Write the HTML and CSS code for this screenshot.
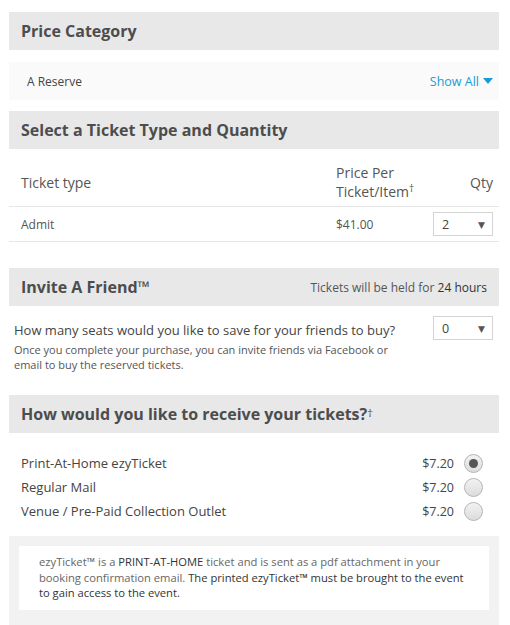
FILE: index.html
```html
<!DOCTYPE html>
<html>
<head>
<meta charset="utf-8">
<link rel="stylesheet" href="styles.css">
</head>
<body>
<div class="page">
  <section class="panel">
    <h2 class="head">Price Category</h2>
    <div class="cat-row">
      <span>A Reserve</span>
      <span class="show-all">Show All <svg class="caret" width="10" height="6" viewBox="0 0 10 6"><path d="M0 0H10L5 6Z" fill="#1a9ad6"/></svg></span>
    </div>
  </section>

  <section class="panel sec2">
    <h2 class="head">Select a Ticket Type and Quantity</h2>
    <div class="ticket-head">
      <span class="c1">Ticket type</span>
      <span class="c2">Price Per<br>Ticket/Item<sup>†</sup></span>
      <span class="c3">Qty</span>
    </div>
    <div class="ticket-row">
      <span class="c1">Admit</span>
      <span class="c2">$41.00</span>
      <span class="c3"><span class="select"><span>2</span><span class="arr">▼</span></span></span>
    </div>
  </section>

  <section class="panel sec3">
    <div class="head head-split">
      <h2 class="title">Invite A Friend™</h2>
      <span class="held">Tickets will be held for <b>24 hours</b></span>
    </div>
    <div class="invite">
      <div class="invite-text">
        <p class="q">How many seats would you like to save for your friends to buy?</p>
        <p class="desc">Once you complete your purchase, you can invite friends via Facebook or email to buy the reserved tickets.</p>
      </div>
      <span class="select"><span>0</span><span class="arr">▼</span></span>
    </div>
  </section>

  <section class="panel sec4">
    <h2 class="head">How would you like to receive your tickets?<sup>†</sup></h2>
    <ul class="delivery">
      <li><span class="name">Print-At-Home ezyTicket</span><span class="price">$7.20</span><span class="radio on"></span></li>
      <li><span class="name">Regular Mail</span><span class="price">$7.20</span><span class="radio"></span></li>
      <li><span class="name">Venue / Pre-Paid Collection Outlet</span><span class="price">$7.20</span><span class="radio"></span></li>
    </ul>
  </section>

  <section class="info-wrap">
    <div class="info">
      ezyTicket™ is a <span class="dk">PRINT-AT-HOME</span> ticket and is sent as a pdf attachment in your booking confirmation email. <span class="dk">The printed ezyTicket™ must be brought to the event to gain access to the event.</span>
    </div>
  </section>
</div>
</body>
</html>
```
FILE: styles.css
```css
* { box-sizing: border-box; }
html, body { margin: 0; padding: 0; background: #fff; }
body {
  font-family: "Open Sans", "DejaVu Sans", sans-serif;
  color: #555;
}
.page {
  width: 490px;
  margin-left: 9px;
  padding-top: 12px;
}
.panel { margin: 0; }
.head {
  margin: 0;
  height: 38px;
  background: #e8e8e8;
  padding: 0 12px;
  display: flex;
  align-items: center;
  font-size: 16px;
  font-weight: 700;
  color: #4d4d4d;
}
.head sup { font-size: 11px; font-weight: 400; position: relative; top: -2px; }
.cat-row {
  margin-top: 12px;
  height: 38px;
  background: #fafafa;
  display: flex;
  align-items: center;
  justify-content: space-between;
  padding: 0 6px 0 18px;
  font-size: 12px;
  color: #444;
}
.show-all { color: #1a9ad6; font-size: 12.5px; display: flex; align-items: center; gap: 4px; }
.caret { display: block; }
.sec2 { margin-top: 11px; }
.ticket-head, .ticket-row {
  display: flex;
  align-items: center;
  padding: 0 6px 0 12px;
  border-bottom: 1px solid #e6e6e6;
}
.ticket-head { height: 58px; font-size: 14px; color: #555; padding-top: 10px; }
.ticket-head .c2 { line-height: 19px; }
.ticket-head sup { font-size: 10px; vertical-align: 0; position: relative; top: -5px; }
.ticket-row { height: 35px; font-size: 12px; }
.c1 { flex: 1; }
.c2 { width: 97px; }
.c3 { width: 60px; display: flex; justify-content: flex-end; }
.select {
  width: 60px;
  height: 24px;
  border: 1px solid #d4d4d4;
  background: #fff;
  display: flex;
  align-items: center;
  justify-content: space-between;
  padding: 0 7px 0 8px;
  font-size: 12.5px;
  color: #444;
}
.arr { font-size: 9px; color: #555; }
.sec3 { margin-top: 26px; }
.head-split { justify-content: space-between; }
.title { margin: 0; font-size: 16px; font-weight: 700; }
.held { font-size: 12px; font-weight: 400; color: #555; }
.held b { font-weight: 400; color: #333; }
.invite {
  display: flex;
  justify-content: space-between;
  align-items: flex-start;
  padding: 10px 6px 0 5px;
}
.invite-text { width: 390px; }
.q { margin: 5px 0 0; font-size: 13px; color: #444; }
.desc { margin: 3px 0 0; font-size: 11px; line-height: 15px; color: #555; }
.sec4 { margin-top: 23px; }
.delivery {
  list-style: none;
  margin: 0;
  padding: 18px 16px 0 12px;
}
.delivery li {
  display: flex;
  align-items: center;
  height: 24px;
  font-size: 13px;
  color: #444;
}
.delivery .name { flex: 1; }
.delivery .price { font-size: 12.5px; margin-right: 10px; }
.radio {
  width: 19px;
  height: 19px;
  border-radius: 50%;
  border: 1px solid #b5b5b5;
  background: linear-gradient(#f2f2f2, #dcdcdc);
  position: relative;
}
.radio.on::after {
  content: "";
  position: absolute;
  left: 4px;
  top: 4px;
  width: 9px;
  height: 9px;
  border-radius: 50%;
  background: #555;
}
.info-wrap {
  margin-top: 13px;
  background: #f2f2f2;
  padding: 10px 10px 30px;
}
.info {
  background: #fff;
  padding: 8px 20px 9px;
  font-size: 11.2px;
  line-height: 15.5px;
  color: #666;
}
.dk { color: #333; }
```
